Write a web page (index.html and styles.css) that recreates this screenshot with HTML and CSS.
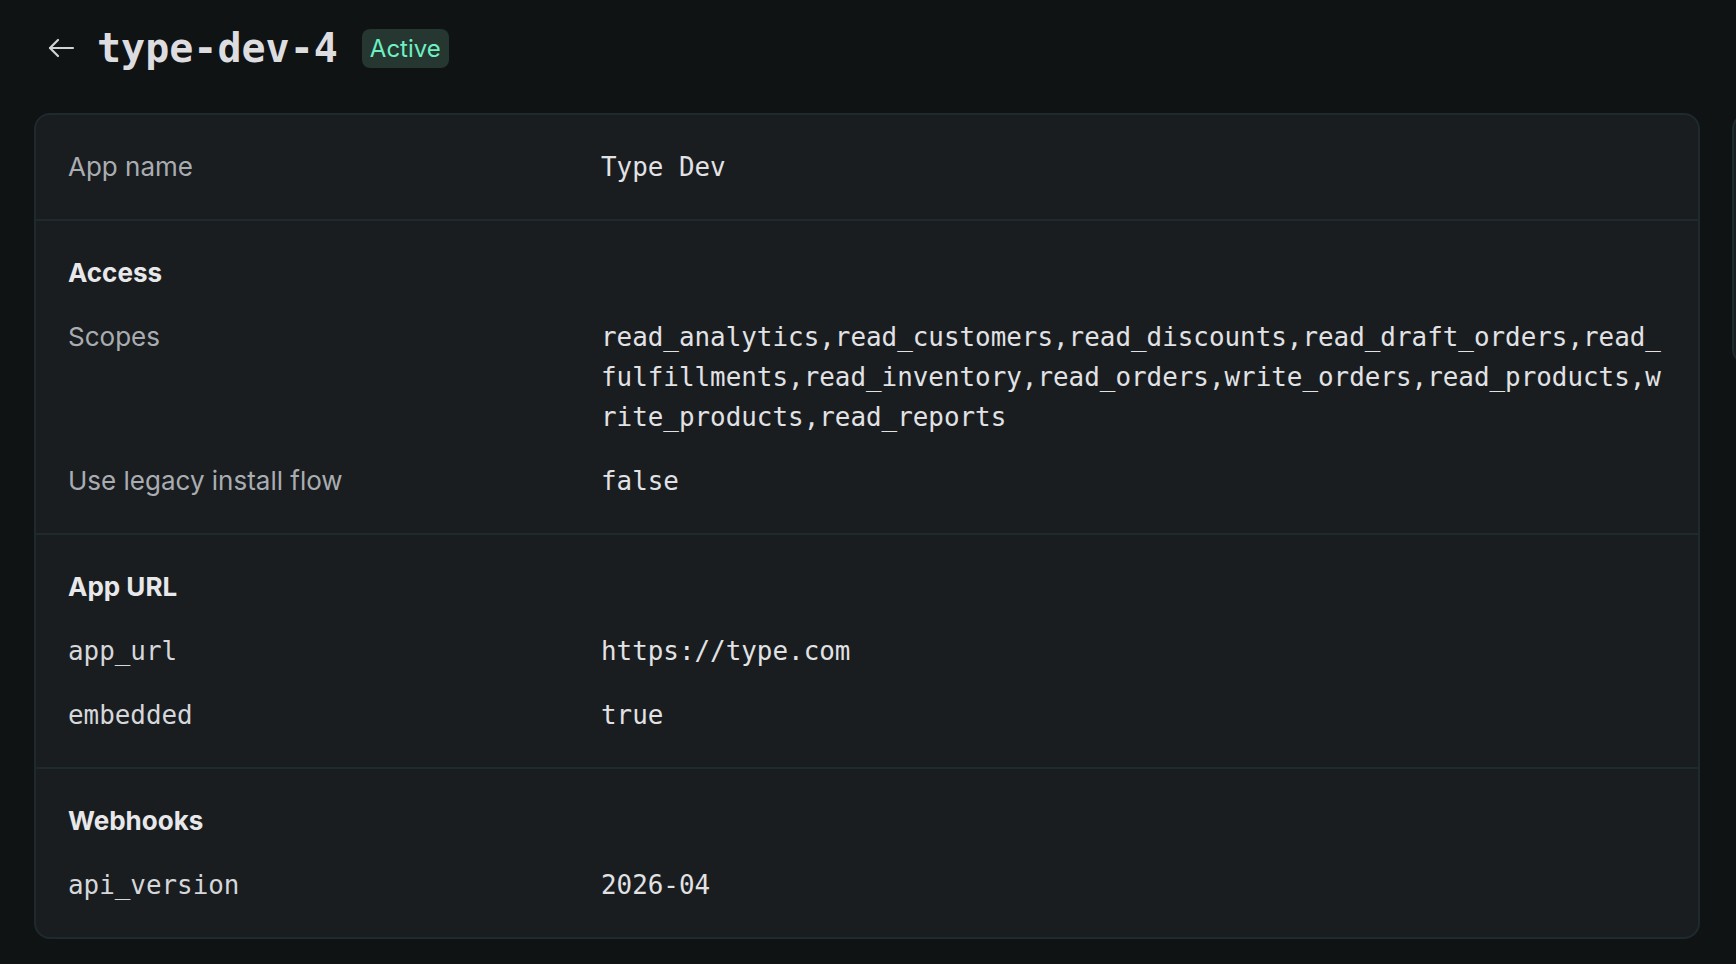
FILE: index.html
```html
<!DOCTYPE html>
<html lang="en">
<head>
    <meta charset="UTF-8">
    <meta name="viewport" content="width=device-width, initial-scale=1.0">
    <title>type-dev-4</title>
    <link rel="stylesheet" href="styles.css">
</head>
<body>
    <div id="app">
        <header class="page-header">
            <a class="back" href="#" aria-label="Back">
                <svg width="28" height="20" viewBox="0 0 28 20" fill="none" stroke="currentColor" stroke-width="2.2" stroke-linecap="round" stroke-linejoin="round">
                    <path d="M26 10H3"/>
                    <path d="M11 2L3 10l8 8"/>
                </svg>
            </a>
            <h1 class="title">type-dev-4</h1>
            <span class="badge">Active</span>
        </header>

        <div class="cards">
            <div class="card">
                <section class="section">
                    <div class="row">
                        <span class="label">App name</span>
                        <span class="value">Type Dev</span>
                    </div>
                </section>

                <section class="section">
                    <h2>Access</h2>
                    <div class="row">
                        <span class="label">Scopes</span>
                        <span class="value">read_analytics,read_customers,read_discounts,read_draft_orders,read_fulfillments,read_inventory,read_orders,write_orders,read_products,write_products,read_reports</span>
                    </div>
                    <div class="row">
                        <span class="label">Use legacy install flow</span>
                        <span class="value">false</span>
                    </div>
                </section>

                <section class="section">
                    <h2>App URL</h2>
                    <div class="row">
                        <span class="label mono">app_url</span>
                        <span class="value">https://type.com</span>
                    </div>
                    <div class="row">
                        <span class="label mono">embedded</span>
                        <span class="value">true</span>
                    </div>
                </section>

                <section class="section">
                    <h2>Webhooks</h2>
                    <div class="row">
                        <span class="label mono">api_version</span>
                        <span class="value">2026-04</span>
                    </div>
                </section>
            </div>

            <!-- next card in the strip, mostly off screen -->
            <div class="card card-side"></div>
        </div>
    </div>
</body>
</html>
```

FILE: styles.css
```css
body {
    font-family: 'Inter', 'Noto Sans', sans-serif;
    margin: 0;
    padding: 0;
    background-color: #0f1314;
    color: #e4e4e7;
    overflow: hidden;
}

#app {
    padding: 28px 0 0 34px;
}

.page-header {
    display: flex;
    align-items: center;
    height: 40px;
    padding-left: 7px;
}

.back {
    display: flex;
    align-items: center;
    justify-content: center;
    width: 40px;
    height: 40px;
    color: #d2d3d6;
}

.title {
    margin: 0 24px 0 16px;
    font-family: 'DejaVu Sans Mono', monospace;
    font-size: 40px;
    line-height: 40px;
    font-weight: bold;
    color: #dddde0;
}

.badge {
    padding: 0 8px;
    height: 39px;
    line-height: 39px;
    font-size: 24px;
    color: #6ef0c2;
    background-color: #263631;
    border-radius: 8px;
}

.cards {
    display: flex;
    gap: 32px;
    margin-top: 45px;
    overflow: hidden;
}

.card {
    flex: 0 0 1666px;
    box-sizing: border-box;
    background-color: #191d20;
    border: 2px solid #1e2a2d;
    border-radius: 16px;
    overflow: hidden;
}

.card-side {
    flex-basis: 400px;
    height: 252px;
}

.section {
    display: flex;
    flex-direction: column;
    gap: 24px;
    padding: 32px 24px 32px 32px;
    border-top: 2px solid #1e2a2d;
}

.section:first-child {
    border-top: none;
}

.section h2 {
    margin: 0;
    font-size: 26px;
    line-height: 40px;
    font-weight: 700;
    color: #e8e8ea;
}

.row {
    display: grid;
    grid-template-columns: 533px 1fr;
    font-size: 26px;
    line-height: 40px;
}

.label {
    color: #a9adb2;
}

.value,
.label.mono {
    font-family: 'DejaVu Sans Mono', monospace;
    font-size: 25.9px;
    color: #e2e2e5;
    word-break: break-all;
}

.label.mono {
    color: #d6d7da;
}
```
